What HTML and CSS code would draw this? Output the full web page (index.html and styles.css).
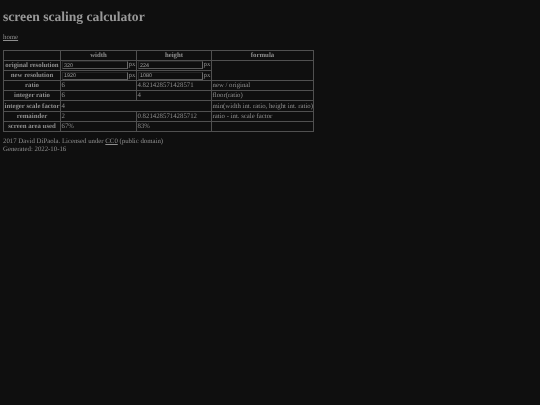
FILE: index.html
```html
<!DOCTYPE html>
<html>
<head>
  <title>screen scaling calculator</title>
  <meta charset="UTF-8">
  <link rel="stylesheet" href="styles.css">
</head>
<body>
  <div class="page">
    <h1>screen scaling calculator</h1>
    <p class="nav"><a href="#">home</a></p>

    <table>
      <tr>
        <th class="col-label"></th>
        <th class="col-width">width</th>
        <th class="col-height">height</th>
        <th class="col-formula">formula</th>
      </tr>
      <tr>
        <th>original resolution</th>
        <td><div class="field"><input type="text" value="320"><span>px</span></div></td>
        <td><div class="field"><input type="text" value="224"><span>px</span></div></td>
        <td rowspan="2"></td>
      </tr>
      <tr>
        <th>new resolution</th>
        <td><div class="field"><input type="text" value="1920"><span>px</span></div></td>
        <td><div class="field"><input type="text" value="1080"><span>px</span></div></td>
      </tr>
      <tr>
        <th>ratio</th>
        <td>6</td>
        <td>4.821428571428571</td>
        <td>new / original</td>
      </tr>
      <tr>
        <th>integer ratio</th>
        <td>6</td>
        <td>4</td>
        <td>floor(ratio)</td>
      </tr>
      <tr>
        <th>integer scale factor</th>
        <td colspan="2">4</td>
        <td>min(width int. ratio, height int. ratio)</td>
      </tr>
      <tr>
        <th>remainder</th>
        <td>2</td>
        <td>0.8214285714285712</td>
        <td>ratio - int. scale factor</td>
      </tr>
      <tr>
        <th>screen area used</th>
        <td>67%</td>
        <td>83%</td>
        <td></td>
      </tr>
    </table>

    <p class="footer">
      2017 David DiPaola. Licensed under <a href="#">CC0</a> (public domain)<br>
      Generated: 2022-10-16
    </p>
  </div>
</body>
</html>
```

FILE: styles.css
```css
body {
  margin: 0;
  background-color: #0f0f0f;
  color: #8e8e8e;
  font-family: "Liberation Serif", "Times New Roman", serif;
  font-size: 6.8px;
  line-height: 8px;
  text-rendering: geometricPrecision;
}

.page {
  padding: 3px;
  filter: blur(0.35px);
}

h1 {
  margin: 6px 0 8.5px;
  font-size: 13.6px;
  line-height: 16px;
  font-weight: bold;
  color: #989898;
}

a {
  color: #8e8e8e;
}

.nav {
  margin: 0 0 8px;
}

table {
  border-collapse: collapse;
  table-layout: fixed;
  width: 310px;
}

th,
td {
  box-sizing: border-box;
  border: 1px solid #505050;
  padding: 1.2px 0 0 0.5px;
  height: 10.1px;
  white-space: nowrap;
}

th {
  padding-left: 0;
  text-align: center;
  font-weight: bold;
}

.col-label {
  width: 57px;
}

.col-width {
  width: 76px;
}

.col-height {
  width: 75px;
}

.col-formula {
  width: 102px;
}

.field {
  display: flex;
  align-items: center;
  height: 8px;
  margin-top: -1px;
}

.field input {
  flex: 1;
  min-width: 0;
  height: 8px;
  box-sizing: border-box;
  margin: 0;
  padding: 0.5px 1.5px 0;
  background-color: #0f0f0f;
  color: #a0a0a0;
  font-family: "Liberation Sans", Arial, sans-serif;
  font-size: 5.4px;
  text-rendering: geometricPrecision;
  border: 1px solid #242424;
  border-right: 1px solid #6a6a6a;
  border-bottom: 1.5px solid #5a5a5a;
}

.field span {
  flex: none;
  width: 8px;
  padding-left: 0.5px;
  box-sizing: border-box;
}

.footer {
  margin: 5.7px 0 0;
}
```
